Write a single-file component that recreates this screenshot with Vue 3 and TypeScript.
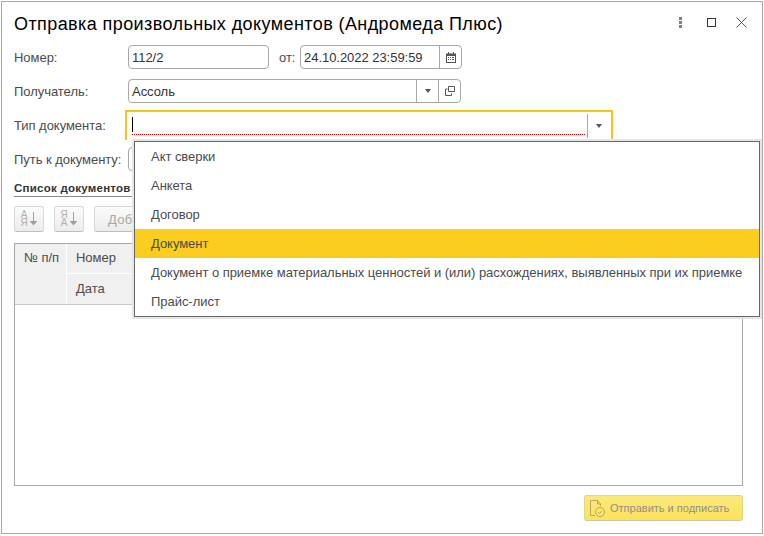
<script setup lang="ts">
const items: string[] = [
  'Акт сверки',
  'Анкета',
  'Договор',
  'Документ',
  'Документ о приемке материальных ценностей и (или) расхождениях, выявленных при их приемке',
  'Прайс-лист',
]
const activeItem = 'Документ'
</script>

<template>
  <div class="window">
    <header class="titlebar">
      <h1 class="title">Отправка произвольных документов (Андромеда Плюс)</h1>
      <div class="winctl">
        <svg width="3" height="11" viewBox="0 0 3 11"><g fill="#808080"><rect width="3" height="3"/><rect y="4" width="3" height="3"/><rect y="8" width="3" height="3"/></g></svg>
        <svg class="max" width="9" height="9" viewBox="0 0 9 9"><rect x="0.5" y="0.5" width="8" height="8" fill="none" stroke="#333"/></svg>
        <svg class="close" width="11" height="11" viewBox="0 0 11 11"><path d="M0.5 0.5l10 10M10.500 0.500l-10 10" stroke="#555" fill="none"/></svg>
      </div>
    </header>

    <div class="row r1">
      <label class="lbl">Номер:</label>
      <div class="field f-num"><span class="val">112/2</span></div>
      <span class="ot">от:</span>
      <div class="field f-date">
        <span class="val grow">24.10.2022 23:59:59</span>
        <span class="btn cal">
          <svg width="10" height="11" viewBox="0 0 10 11"><path d="M0 1.500h10V11H0z" fill="#555"/><rect x="1" y="4" width="8" height="6" fill="#fff"/><path d="M2 0h1v2H2zM7 0h1v2H7z" fill="#555"/><g fill="#555"><rect x="2" y="5" width="1" height="1"/><rect x="4" y="5" width="1" height="1"/><rect x="6" y="5" width="2" height="1"/><rect x="2" y="7" width="1" height="1"/><rect x="4" y="7" width="1" height="1"/><rect x="6" y="7" width="2" height="1"/></g></svg>
        </span>
      </div>
    </div>

    <div class="row r2">
      <label class="lbl">Получатель:</label>
      <div class="field f-recv">
        <span class="val grow">Ассоль</span>
        <span class="btn arrow"><i class="tri"></i></span>
        <span class="btn open">
          <svg width="10" height="10" viewBox="0 0 10 10"><path d="M3.500 0.500h6v5h-6zM2.500 3H0.500v6.500h6V7.500" fill="none" stroke="#555"/></svg>
        </span>
      </div>
    </div>

    <div class="row r3">
      <label class="lbl">Тип документа:</label>
      <div class="focus">
        <div class="focus-input"><i class="caret"></i></div>
        <span class="btn arrow focus-btn"><i class="tri"></i></span>
      </div>
    </div>

    <div class="row r4">
      <label class="lbl lbl-path">Путь к документу:</label>
      <div class="field f-path"></div>
    </div>

    <div class="section">Список документов</div>

    <div class="toolbar">
      <button class="tool sort">
        <span class="letters"><span class="l1">А</span><span class="l2">Я</span></span>
        <svg width="9" height="15" viewBox="0 0 9 15"><path d="M4.500 0v10" stroke="#a0a0a0"/><path d="M0.500 9h8l-4 4.500z" fill="#a0a0a0"/></svg>
      </button>
      <button class="tool sort">
        <span class="letters"><span class="l2">Я</span><span class="l1">А</span></span>
        <svg width="9" height="15" viewBox="0 0 9 15"><path d="M4.500 0v10" stroke="#a0a0a0"/><path d="M0.500 9h8l-4 4.500z" fill="#a0a0a0"/></svg>
      </button>
      <button class="tool wide">Доб</button>
    </div>

    <div class="table">
      <div class="thead">
        <div class="th th-n">№ п/п</div>
        <div class="th-stack">
          <div class="th">Номер</div>
          <div class="th th-low">Дата</div>
        </div>
      </div>
    </div>

    <footer class="foot">
      <button class="send">
        <svg width="18" height="20" viewBox="0 0 18 20"><g fill="none" stroke="#b3a868"><path d="M6 17.500H1.500V2.500h7l3 3.500v2M8.500 2.500v3.500h3"/><circle cx="11" cy="14" r="4.500"/><path d="M9 14l1.500 1.500 2.500-2.500"/></g></svg>
        <span>Отправить и подписать</span>
      </button>
    </footer>

    <ul class="menu">
      <li v-for="item in items" :key="item" :class="{ active: item === activeItem }">{{ item }}</li>
    </ul>
  </div>
</template>

<style>
html, body { margin: 0; background: #fff; }
</style>

<style scoped>
.window {
  position: relative;
  box-sizing: border-box;
  width: 762px;
  height: 533px;
  margin: 1px 0 0 1px;
  border: 1px solid #a8a8a8;
  padding: 0 19px 0 12px;
  background: #fff;
  font-family: "Liberation Sans", Arial, sans-serif;
  font-size: 13px;
  letter-spacing: -0.04px;
  color: #4b4b4b;
  overflow: hidden;
}
.titlebar { display: flex; align-items: center; height: 43px; padding-top: 1px; box-sizing: border-box; }
.title { margin: 0; flex: 1; font-size: 18px; font-weight: 400; color: #000; letter-spacing: 0.41px; }
.winctl { display: flex; align-items: center; margin: 0 -4px 3px 0; }
.winctl .max { margin-left: 25px; }
.winctl .close { margin-left: 20px; }
.row { display: flex; align-items: center; }
.r1 { height: 24px; }
.r2 { height: 24px; margin-top: 10px; }
.r3 { height: 30px; margin-top: 7px; }
.r4 { height: 24px; margin-top: 7px; }
.lbl { width: 114px; flex: none; }
.lbl-path { white-space: nowrap; }
.field {
  box-sizing: border-box;
  display: flex;
  align-items: stretch;
  height: 24px;
  border: 1px solid #a8a8a8;
  border-radius: 4px;
  background: #fff;
}
.val { display: flex; align-items: center; padding-left: 3px; color: #333; }
.grow { flex: 1; }
.f-num { width: 141px; }
.ot { margin: 0 5px 0 10px; width: 16px; }
.f-date { width: 162px; }
.f-recv { width: 333px; }
.f-path { width: 40px; }
.btn { display: flex; align-items: center; justify-content: center; border-left: 1px solid #a8a8a8; flex: none; }
.cal { width: 21px; }
.arrow { width: 21px; }
.open { width: 21px; }
.tri { display: block; width: 0; height: 0; border: 3px solid transparent; border-top: 4px solid #555; border-bottom: 0; }
.focus {
  box-sizing: border-box;
  display: flex;
  width: 488px;
  height: 30px;
  margin-left: -3px;
  border: 2px solid #f5c518;
  border-bottom: 0;
  padding: 2px 2px 2px 5px;
}
.focus-input {
  flex: 1;
  position: relative;
  height: 21px;
  margin-right: 2px;
  background: repeating-linear-gradient(90deg, #e00000 0 1px, transparent 1px 2px) left bottom / 100% 1px no-repeat;
}
.caret { position: absolute; left: 0; top: 3px; width: 1px; height: 15px; background: #000; }
.focus-btn { width: 21px; height: 24px; }
.section {
  box-sizing: border-box;
  height: 19px;
  margin-top: 7px;
  padding-top: 4px;
  border-bottom: 1px solid #8a8a8a;
  font-weight: 700;
  color: #333;
  font-size: 11.500px;
  letter-spacing: 0.25px;
}
.toolbar { display: flex; gap: 10px; margin-top: 9px; }
.tool {
  box-sizing: border-box;
  width: 30px;
  height: 26px;
  padding: 0;
  border: 1px solid #d9d9d9;
  border-bottom-color: #bdbdbd;
  border-radius: 3px;
  background: linear-gradient(#fbfbfb, #ececec);
  display: flex;
  align-items: center;
  justify-content: center;
}
.sort { gap: 1px; }
.letters { display: flex; flex-direction: column; font-family: "Liberation Sans", Arial, sans-serif; font-size: 10px; line-height: 8px; }
.l1 { color: #a9b0bd; }
.l2 { color: #bcaaaa; }
.wide { width: 120px; font: inherit; letter-spacing: 0.3px; color: #a8a8a8; justify-content: flex-start; padding-left: 13px; }
.table {
  box-sizing: border-box;
  width: 729px;
  height: 243px;
  margin-top: 11px;
  border: 1px solid #a8a8a8;
}
.thead { box-sizing: border-box; display: flex; height: 61px; background: #f0f0f0; border-bottom: 1px solid #c8c8c8; }
.th { box-sizing: border-box; padding: 6px 9px; white-space: nowrap; }
.th-n { width: 52px; border-right: 1px solid #fff; }
.th-stack { flex: 1; }
.th-stack .th { height: 30px; padding-left: 9px; }
.th-stack .th:first-child { border-bottom: 1px solid #fff; }
.th-stack .th-low { padding-top: 7px; }
.foot { display: flex; justify-content: flex-end; margin-top: 9px; }
.send {
  box-sizing: border-box;
  display: flex;
  align-items: center;
  gap: 3px;
  width: 159px;
  height: 26px;
  padding: 0 0 0 4px;
  border: 1px solid #e0d68a;
  border-bottom-color: #c9c9a8;
  border-radius: 3px;
  background: linear-gradient(#fbe97a, #fde25a);
  font: inherit;
  letter-spacing: 0;
  color: #8f8f8f;
  font-size: 11px;
}
.menu {
  position: absolute;
  left: 132px;
  top: 139px;
  box-sizing: border-box;
  width: 626px;
  margin: 0;
  padding: 0;
  list-style: none;
  background: #fff;
  border: 1px solid #666;
  box-shadow: 0 0 0 2px #e6e6e6;
}
.menu li {
  height: 29px;
  line-height: 30px;
  padding-left: 16px;
  white-space: nowrap;
  color: #4b4b4b;
}
.menu li.active { background: #fbcd1f; }
</style>
